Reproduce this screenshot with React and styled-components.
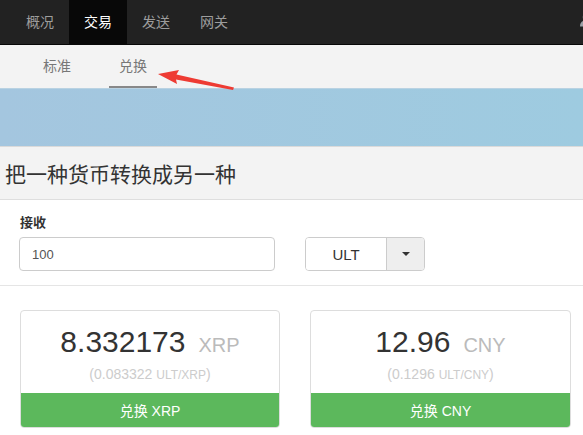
import React from 'react';
import styled, { createGlobalStyle } from 'styled-components';

const GlobalStyle = createGlobalStyle`
	html, body {
		margin: 0;
		padding: 0;
		background: #fff;
		overflow: hidden;
	}
	body {
		font-family: "Liberation Sans", "Noto Sans CJK SC", Arial, sans-serif;
		color: #333;
	}
`;

const navItems = ['概况', '交易', '发送', '网关'];
const subItems = ['标准', '兑换'];

const cards = [
	{ amount: '8.332173', currency: 'XRP', rate: '0.083322', pair: 'ULT/XRP' },
	{ amount: '12.96', currency: 'CNY', rate: '0.1296', pair: 'ULT/CNY' },
];

export default function App() {
	return (
		<Page>
			<GlobalStyle />
			<TopNav>
				{navItems.map((item) => (
					<NavItem key={item} active={item === '交易'}>
						{item}
					</NavItem>
				))}
				<UserIcon viewBox="0 0 14 14">
					<circle cx="7" cy="4" r="3.2" fill="#9aa0a6" />
					<path d="M1 13.5 C1 9 3.5 7.5 7 7.5 C10.5 7.5 13 9 13 13.5 Z" fill="#9aa0a6" />
				</UserIcon>
			</TopNav>
			<SubNav>
				{subItems.map((item) => (
					<SubItem key={item} active={item === '兑换'}>
						{item}
					</SubItem>
				))}
				<Arrow viewBox="0 0 80 24">
					<path d="M76 21 L19 10.5 L20 15 L1 5 L22 1 L19.5 5.5 L77 18.5 Z" fill="#ee3b33" />
				</Arrow>
			</SubNav>
			<Banner />
			<TitleBar>把一种货币转换成另一种</TitleBar>
			<FormSection>
				<Label>接收</Label>
				<FormRow>
					<AmountInput defaultValue="100" />
					<SelectGroup>
						<SelectValue>ULT</SelectValue>
						<Caret>
							<span />
						</Caret>
					</SelectGroup>
				</FormRow>
			</FormSection>
			<Cards>
				{cards.map((c) => (
					<Card key={c.currency}>
						<CardBody>
							<Amount>
								{c.amount}
								<Currency>{c.currency}</Currency>
							</Amount>
							<Rate>
								({c.rate} <small>{c.pair}</small>)
							</Rate>
						</CardBody>
						<ConvertButton>兑换 {c.currency}</ConvertButton>
					</Card>
				))}
			</Cards>
		</Page>
	);
}

const Page = styled.div`
	width: 583px;
	height: 435px;
	overflow: hidden;
`;

const TopNav = styled.div`
	display: flex;
	height: 44px;
	background: #222;
	border-bottom: 1px solid #080808;
	padding-left: 11px;
	overflow: hidden;
`;

const NavItem = styled.div`
	display: flex;
	align-items: center;
	padding: 0 15px 3px;
	font-size: 14px;
	color: ${({ active }) => (active ? '#fff' : '#9d9d9d')};
	background: ${({ active }) => (active ? '#080808' : 'transparent')};
`;

const UserIcon = styled.svg`
	width: 14px;
	height: 14px;
	margin: 13px -10px 0 auto;
	flex-shrink: 0;
`;

const SubNav = styled.div`
	position: relative;
	display: flex;
	align-items: flex-end;
	height: 43px;
	background: #f3f3f3;
	padding-left: 33px;
`;

const SubItem = styled.div`
	display: flex;
	align-items: center;
	height: 35px;
	padding: 0 10px 4px;
	margin-right: 28px;
	font-size: 14px;
	color: #777;
	border-bottom: 2px solid ${({ active }) => (active ? '#888' : 'transparent')};
`;

const Arrow = styled.svg`
	position: absolute;
	left: 157px;
	top: 24px;
	width: 80px;
	height: 24px;
`;

const Banner = styled.div`
	height: 57px;
	background: linear-gradient(to right, #a4c6df, #9ecbe0);
	border-top: 1px solid #b9d2e2;
`;

const TitleBar = styled.div`
	height: 52px;
	display: flex;
	align-items: center;
	padding-left: 5px;
	background: #f3f3f3;
	border-top: 1px solid #dadada;
	border-bottom: 1px solid #dedede;
	font-family: "Noto Sans CJK SC", sans-serif;
	font-size: 21px;
	color: #333;
`;

const FormSection = styled.div`
	padding: 15px 20px 14px 19px;
	border-bottom: 1px solid #e5e5e5;
`;

const Label = styled.div`
	font-size: 13px;
	font-weight: bold;
	color: #333;
	margin-left: 1px;
	margin-bottom: 6px;
	line-height: 16px;
`;

const FormRow = styled.div`
	display: flex;
	gap: 30px;
`;

const AmountInput = styled.input`
	width: 256px;
	height: 34px;
	box-sizing: border-box;
	border: 1px solid #ccc;
	border-radius: 4px;
	padding: 0 12px;
	font-family: "Liberation Sans", Arial, sans-serif;
	font-size: 13px;
	color: #555;
	outline: none;
`;

const SelectGroup = styled.div`
	display: flex;
	height: 34px;
	box-sizing: border-box;
	border: 1px solid #ccc;
	border-radius: 4px;
	overflow: hidden;
`;

const SelectValue = styled.div`
	width: 80px;
	display: flex;
	align-items: center;
	justify-content: center;
	font-size: 15px;
	color: #333;
	background: #fff;
	border-right: 1px solid #ccc;
`;

const Caret = styled.div`
	width: 37px;
	display: flex;
	align-items: center;
	justify-content: center;
	background: #eee;
	span {
		width: 0;
		height: 0;
		border-left: 4px solid transparent;
		border-right: 4px solid transparent;
		border-top: 4px solid #333;
	}
`;

const Cards = styled.div`
	display: grid;
	grid-template-columns: 260px 261px;
	gap: 30px;
	padding: 24px 13px 0 20px;
`;

const Card = styled.div`
	border: 1px solid #ddd;
	border-radius: 4px;
	overflow: hidden;
	background: #fff;
`;

const CardBody = styled.div`
	height: 82px;
	box-sizing: border-box;
	padding-top: 14px;
	text-align: center;
`;

const Amount = styled.div`
	height: 34px;
	font-size: 30px;
	line-height: 34px;
	color: #333;
`;

const Currency = styled.span`
	font-size: 20px;
	line-height: 1;
	color: #bbb;
	margin-left: 13px;
`;

const Rate = styled.div`
	margin-top: 6px;
	height: 18px;
	font-size: 14px;
	line-height: 18px;
	color: #ccc;
	small {
		font-size: 12px;
		line-height: 1;
	}
`;

const ConvertButton = styled.div`
	height: 34px;
	display: flex;
	align-items: center;
	justify-content: center;
	background: #5cb85c;
	color: #fff;
	font-size: 14px;
`;
